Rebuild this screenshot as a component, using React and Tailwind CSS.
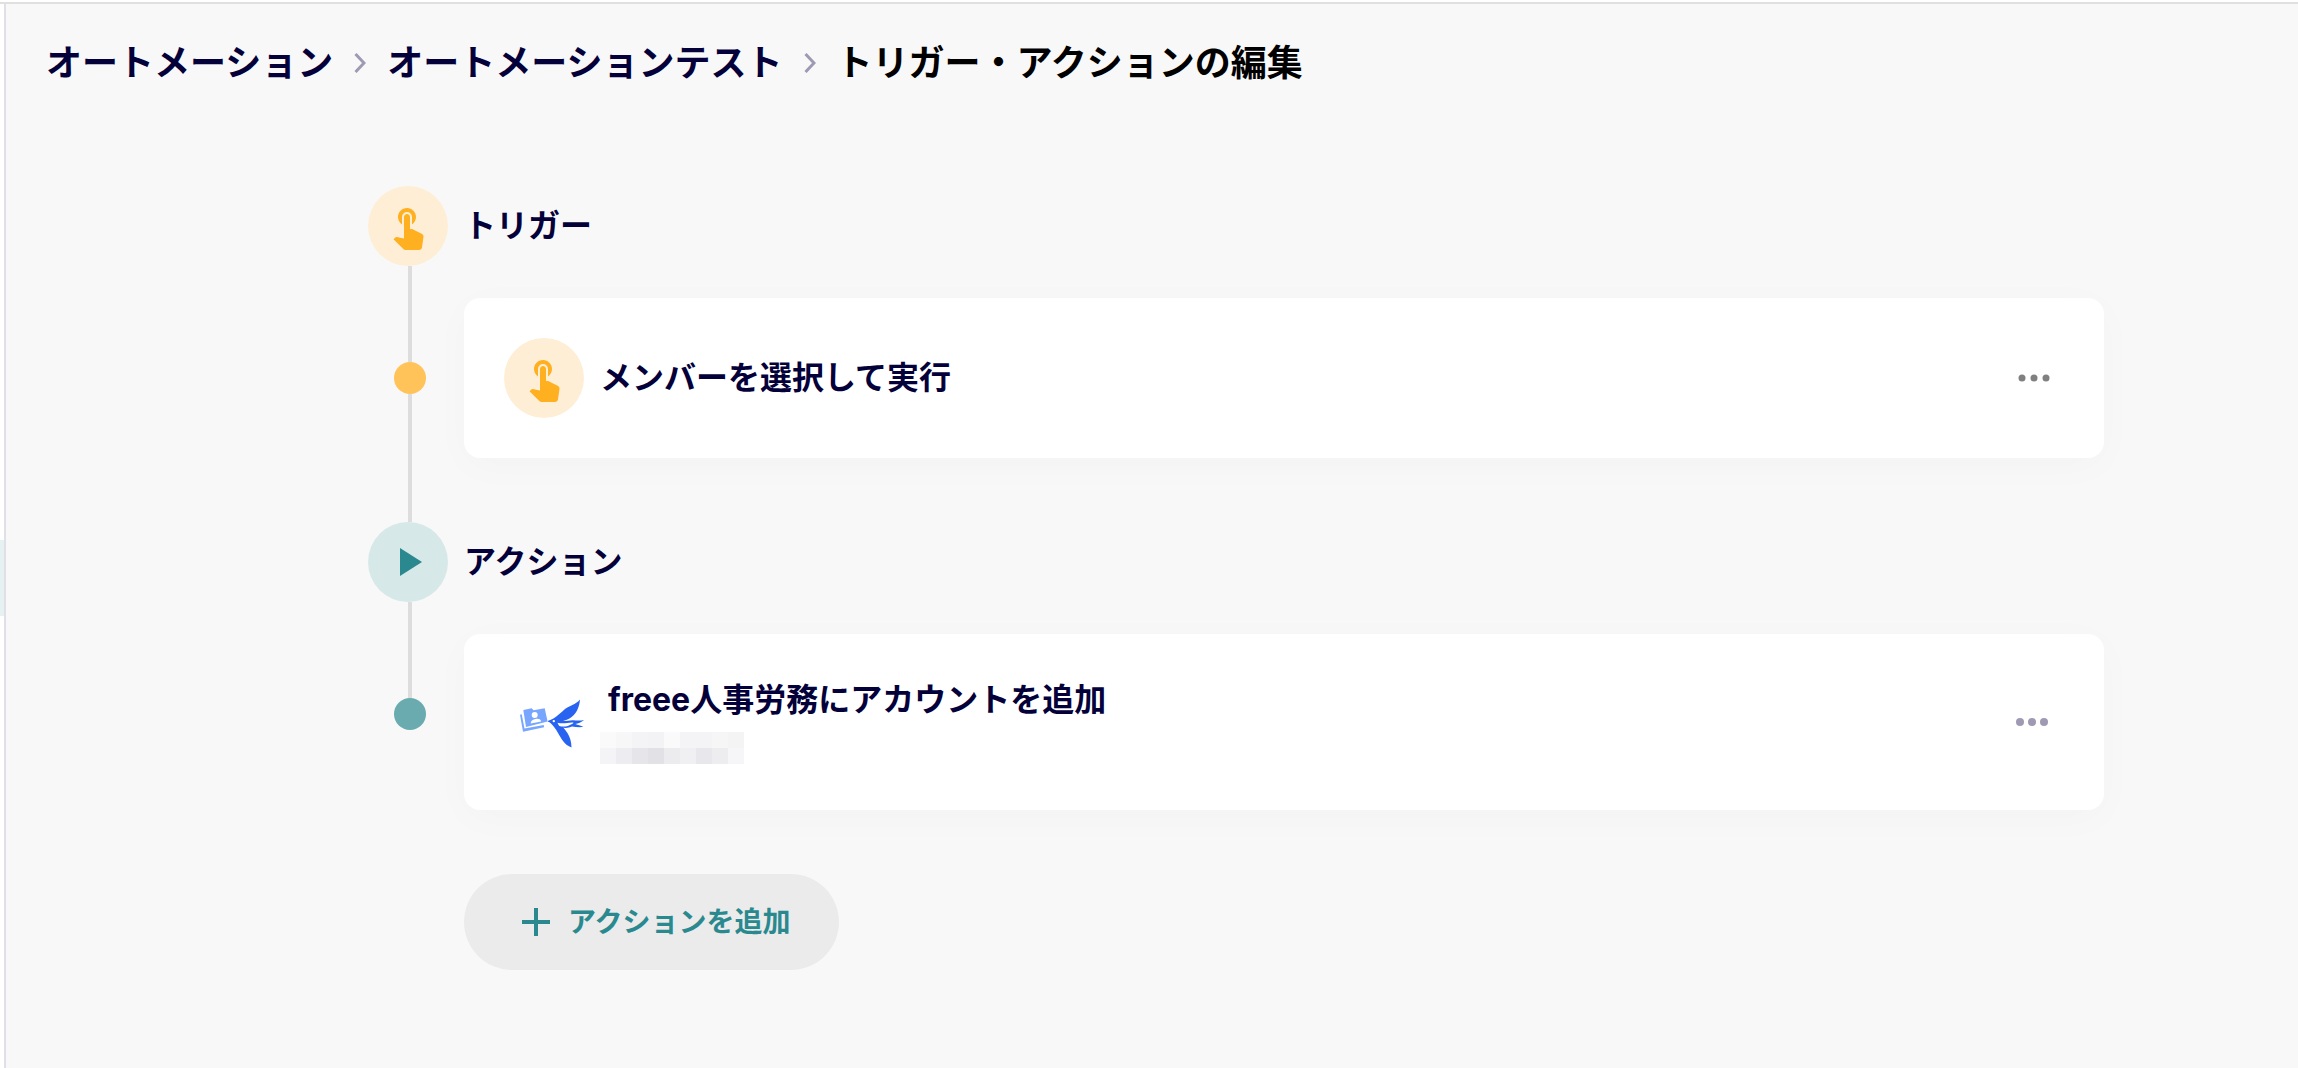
import { MdTouchApp } from 'react-icons/md';

const MASK_CELLS = [
  'bg-[#fafafa]', 'bg-[#f7f7f7]', 'bg-[#f4f4f6]', 'bg-[#f3f3f6]', 'bg-[#fafafa]', 'bg-[#f4f4f6]', 'bg-[#f4f4f7]', 'bg-[#f6f6f6]', 'bg-[#f4f4f4]',
  'bg-[#f4f4f6]', 'bg-[#edecf1]', 'bg-[#e6e5ea]', 'bg-[#e2e1e6]', 'bg-[#ececee]', 'bg-[#f0f0f2]', 'bg-[#e8e7ec]', 'bg-[#ededef]', 'bg-[#f6f6f8]',
];

function Chevron() {
  return (
    <svg aria-hidden="true" viewBox="0 0 12 20" className="h-5 w-3 shrink-0 text-[#9f99b3]">
      <path d="M1.500 1 L10 10 L1.500 19" fill="none" stroke="currentColor" strokeWidth="3" />
    </svg>
  );
}

function TouchBadge() {
  return (
    <span className="flex size-20 shrink-0 items-center justify-center rounded-full bg-[#ffeed6]">
      <MdTouchApp aria-hidden="true" className="size-12 text-[#ffb020]" />
    </span>
  );
}

function PlayBadge() {
  return (
    <span className="flex size-20 shrink-0 items-center justify-center rounded-full bg-[#d6e8e8]">
      <svg aria-hidden="true" viewBox="0 0 48 48" className="size-12 text-[#2a898f]">
        <path d="M16 10v28l22-14z" fill="currentColor" />
      </svg>
    </span>
  );
}

function FreeeIcon() {
  return (
    <svg aria-hidden="true" viewBox="0 0 64 52" className="h-13 w-16">
      {/* folder carried by the swallow */}
      <g fill="#78a6ff">
        <path d="M0 18.700l1.700-.4 2.800 14.200 19.200-3.600.4 2.300L3 35.700z" />
        <path d="M3.300 14l8.400-1.700 1.800 2 11.200-2 2.900 13.200L6 31z" />
      </g>
      <circle cx="14.700" cy="19" r="3" fill="#fff" />
      <path d="M10.800 27.400c-.2-2.600 2-3.900 4.700-4.400 2.800-.5 5.100 0 5.700 2.400z" fill="#fff" />
      {/* swallow */}
      <g fill="#2864f0">
        <path d="M27.500 25.300l5.500-2.500C37 20.500 41 16.500 45 13 50 9.300 56 8.500 60 3.500 59.500 12 55.500 19 49.500 22.500 46 24.500 42 25 38 26.500l-5 1z" />
        <path d="M27.800 25l9-1.500 3.200 4C45 34 51.500 39 51.500 51.500 44.500 49 41 42 38 37 36 33 33.500 30 30.500 27z" />
        <path d="M37.500 24.500c7 1.500 10.500-.4 15.500-.3 3.500.2 7 .7 11-.3-2.500 2.500-6 3.200-8.700 4.200 2.700.9 5.300 1.500 8.200 2.700-4 .9-8 0-11.500-.3-4 2-10.500 2-14-1z" />
      </g>
      <path d="M37.500 26.700c6 1.500 11-.6 15.500-.2 1 .2.500.8-1 1.500-4 2.300-9 3.600-13 1.700z" fill="#fff" />
      <circle cx="33.800" cy="25.100" r="1.200" fill="#fff" />
    </svg>
  );
}

function MoreIcon({ className, r }) {
  return (
    <svg aria-hidden="true" viewBox="0 0 32 8" className={className}>
      <circle cx="4" cy="4" r={r} fill="currentColor" />
      <circle cx="16" cy="4" r={r} fill="currentColor" />
      <circle cx="28" cy="4" r={r} fill="currentColor" />
    </svg>
  );
}

function Card({ children }) {
  return (
    <div className="flex items-center gap-4 rounded-2xl bg-white p-10 shadow-[0_8px_40px_rgba(0,0,0,0.024)]">
      {children}
    </div>
  );
}

export default function App() {
  return (
    <div className="flex min-h-screen flex-col bg-white font-['Inter','Noto_Sans_CJK_JP',sans-serif] text-[#04003a]">
      <div className="h-1 border-b-2 border-[#e0e0e0]" />
      <div className="flex flex-1">
        <aside className="w-1 pt-[536px]">
          <div className="h-19 bg-[#e6f2f2]" />
        </aside>
        <main className="min-w-0 flex-1 border-l-2 border-[#e0e0e6] bg-[#f8f8f8] pb-16">
          <nav aria-label="パンくずリスト" className="flex items-center gap-[21px] px-10 pt-8 text-4xl leading-[54px] font-bold">
            <a href="#automations">オートメーション</a>
            <Chevron />
            <a href="#automation">オートメーションテスト</a>
            <Chevron />
            <span aria-current="page" className="text-black">トリガー・アクションの編集</span>
          </nav>

          <div className="mt-24 pr-[194px] pl-[362px]">
            <section>
              <div className="flex items-center gap-4">
                <TouchBadge />
                <h2 className="text-[32px] leading-[48px] font-bold">トリガー</h2>
              </div>
              <div className="flex gap-3">
                <div className="flex w-21 shrink-0 flex-col items-center">
                  <div className="h-24 w-1 bg-[#dddddd]" />
                  <div className="size-8 rounded-full bg-[#ffc35a]" />
                  <div className="w-1 flex-1 bg-[#dddddd]" />
                </div>
                <div className="min-w-0 flex-1 pt-8 pb-16">
                  <Card>
                    <TouchBadge />
                    <h3 className="text-[32px] leading-[48px] font-bold">メンバーを選択して実行</h3>
                    <button type="button" aria-label="トリガーのメニュー" className="ml-auto flex size-15 items-center justify-center">
                      <MoreIcon className="h-2 w-8 text-[#808080]" r={3.5} />
                    </button>
                  </Card>
                </div>
              </div>
            </section>

            <section>
              <div className="flex items-center gap-4">
                <PlayBadge />
                <h2 className="text-[32px] leading-[48px] font-bold">アクション</h2>
              </div>
              <div className="flex gap-3">
                <div className="flex w-21 shrink-0 flex-col items-center">
                  <div className="h-24 w-1 bg-[#dddddd]" />
                  <div className="size-8 rounded-full bg-[#6aabb0]" />
                </div>
                <div className="flex min-w-0 flex-1 flex-col items-start gap-16 pt-8">
                  <div className="w-full">
                    <Card>
                      <span className="flex w-20 shrink-0 justify-end">
                        <FreeeIcon />
                      </span>
                      <div className="pt-0.5 pb-1.5">
                        <h3 className="pl-2 text-[32px] leading-[48px] font-bold">freee人事労務にアカウントを追加</h3>
                        <div className="mt-2 grid w-36 grid-cols-9">
                          {MASK_CELLS.map((color, i) => (
                            <span key={i} className={`h-4 ${color}`} />
                          ))}
                        </div>
                      </div>
                      <button type="button" aria-label="アクションのメニュー" className="ml-auto flex size-16 items-center justify-center">
                        <MoreIcon className="h-2 w-8 text-[#9f99b3]" r={4} />
                      </button>
                    </Card>
                  </div>
                  <button
                    type="button"
                    className="flex h-24 items-center gap-4 rounded-full bg-[#ebebeb] pr-12 pl-14 text-[28px] leading-[42px] font-bold text-[#2a898f]"
                  >
                    <svg aria-hidden="true" viewBox="0 0 32 32" className="size-8">
                      <path d="M16 2v28M2 16h28" stroke="currentColor" strokeWidth="4" />
                    </svg>
                    アクションを追加
                  </button>
                </div>
              </div>
            </section>
          </div>
        </main>
      </div>
    </div>
  );
}
